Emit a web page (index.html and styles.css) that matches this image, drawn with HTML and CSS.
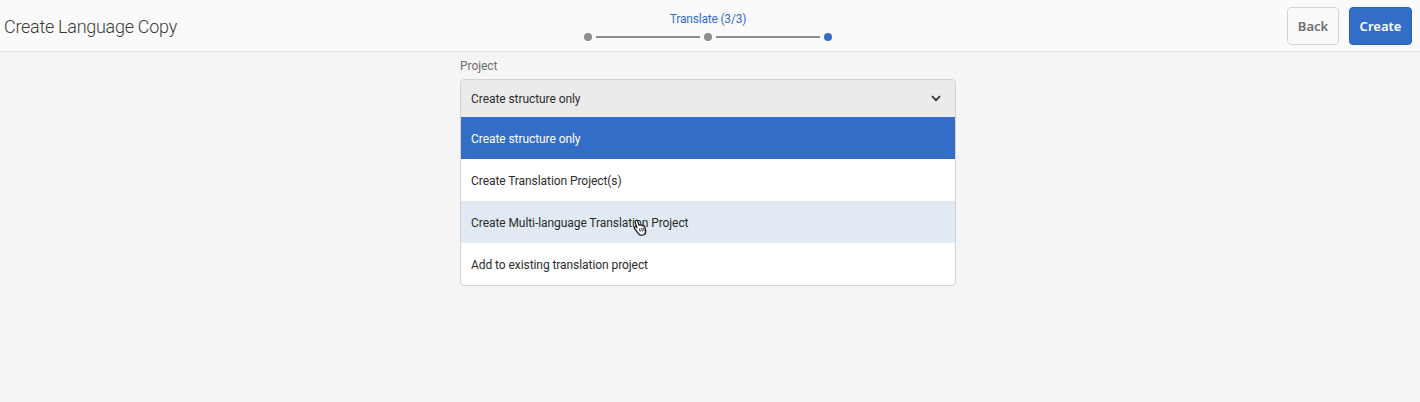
FILE: index.html
```html
<!DOCTYPE html>
<html lang="en">
<head>
<meta charset="utf-8">
<title>Create Language Copy</title>
<link rel="stylesheet" href="styles.css">
</head>
<body>
<header class="topbar">
  <h1 class="title">Create Language Copy</h1>
  <div class="wizard">
    <div class="step-label">Translate (3/3)</div>
    <div class="steps">
      <span class="dot"></span><span class="line"></span><span class="dot"></span><span class="line"></span><span class="dot active"></span>
    </div>
  </div>
  <div class="actions">
    <button class="btn btn-back">Back</button>
    <button class="btn btn-create">Create</button>
  </div>
</header>
<main class="content">
  <div class="field">
    <label class="label">Project</label>
    <div class="select">
      <div class="select-button">
        <span>Create structure only</span>
        <svg class="chevron" width="10" height="7" viewBox="0 0 10 7"><path d="M1 1.2 5 5.2 9 1.2" fill="none" stroke="#2f2f2f" stroke-width="1.7"/></svg>
      </div>
      <ul class="options">
        <li class="option selected">Create structure only</li>
        <li class="option">Create Translation Project(s)</li>
        <li class="option hover">Create Multi-language Translation Project
          <svg class="cursor" width="14" height="18" viewBox="0 0 14 18"><path d="M2.5 1.6c.8-.8 1.9-.4 2.2.6l1.3 4 .9-.3c.8-.2 1.3 0 1.6.5.7-.3 1.4-.1 1.7.5.8-.2 1.4.2 1.6.9l.8 3.6c.4 2-.5 3.9-2.4 4.6-1.900.7-3.700.2-4.800-1.300L1.500 9.500c-.5-.7-.3-1.400.3-1.700.5-.3 1.100-.1 1.600.4l.6.7L2.200 3.400c-.2-.7-.1-1.300.3-1.800z" fill="#fff" stroke="#222" stroke-width="1.300"/><path d="M6.600 9.500l.6 3.200M8.700 9l.6 3.500M10.700 8.800l.5 3.400" stroke="#222" stroke-width="1"/></svg>
        </li>
        <li class="option">Add to existing translation project</li>
      </ul>
    </div>
  </div>
</main>
</body>
</html>
```
FILE: styles.css
```css
* { box-sizing: border-box; }
html, body { margin: 0; height: 100%; }
body {
  background: #f5f5f5;
  color: #2c2c2c;
  font-family: Roboto, "Noto Sans", sans-serif;
  font-size: 12px;
  letter-spacing: -0.07px;
  overflow: hidden;
}
.topbar {
  display: grid;
  grid-template-columns: 584px 248px 1fr;
  height: 52px;
  background: #fafafa;
  border-bottom: 1px solid #e1e1e1;
}
.title {
  margin: 0;
  padding: 15px 0 0 4px;
  font-size: 18px;
  line-height: 24px;
  font-weight: 300;
  letter-spacing: -0.28px;
  color: #3a3a3a;
}
.wizard {
  display: flex;
  flex-direction: column;
  align-items: center;
  padding-top: 11px;
}
.step-label {
  color: #326ec8;
  font-size: 12px;
  line-height: 16px;
  letter-spacing: -0.2px;
}
.steps {
  display: flex;
  align-items: center;
  gap: 4px;
  margin-top: 6px;
}
.dot {
  width: 8px;
  height: 8px;
  border-radius: 50%;
  background: #8e8e8e;
}
.dot.active { background: #326ec8; }
.line {
  width: 104px;
  height: 2px;
  background: #8e8e8e;
}
.actions {
  display: flex;
  justify-content: flex-end;
  gap: 10px;
  padding: 7px 8px 0 0;
}
.btn {
  height: 38px;
  border-radius: 4px;
  font-family: "Noto Sans", sans-serif;
  font-size: 13px;
  font-weight: 600;
  padding: 0;
}
.btn-back {
  width: 52px;
  background: #fafafa;
  border: 1px solid #d3d3d3;
  color: #6e6e6e;
}
.btn-create {
  width: 63px;
  background: #326ec8;
  border: 1px solid #2a62b8;
  color: #fff;
}
.content {
  display: flex;
  justify-content: center;
  padding: 5px 4px 0 0;
}
.field { width: 496px; }
.label {
  display: block;
  height: 22px;
  line-height: 18px;
  color: #6e6e6e;
  font-size: 12px;
}
.select {
  border: 1px solid #d3d3d3;
  border-radius: 4px;
  background: #fff;
  overflow: hidden;
}
.select-button {
  display: flex;
  justify-content: space-between;
  align-items: center;
  height: 37px;
  padding: 0 14px 0 10px;
  background: #ebebeb;
  color: #2c2c2c;
}
.options {
  list-style: none;
  margin: 0;
  padding: 0;
}
.option {
  position: relative;
  height: 42px;
  line-height: 44px;
  padding-left: 10px;
}
.option.selected {
  background: #326ec8;
  color: #fff;
}
.option.hover { background: #e1e9f3; }
.cursor {
  position: absolute;
  left: 172px;
  top: 18px;
}
```
